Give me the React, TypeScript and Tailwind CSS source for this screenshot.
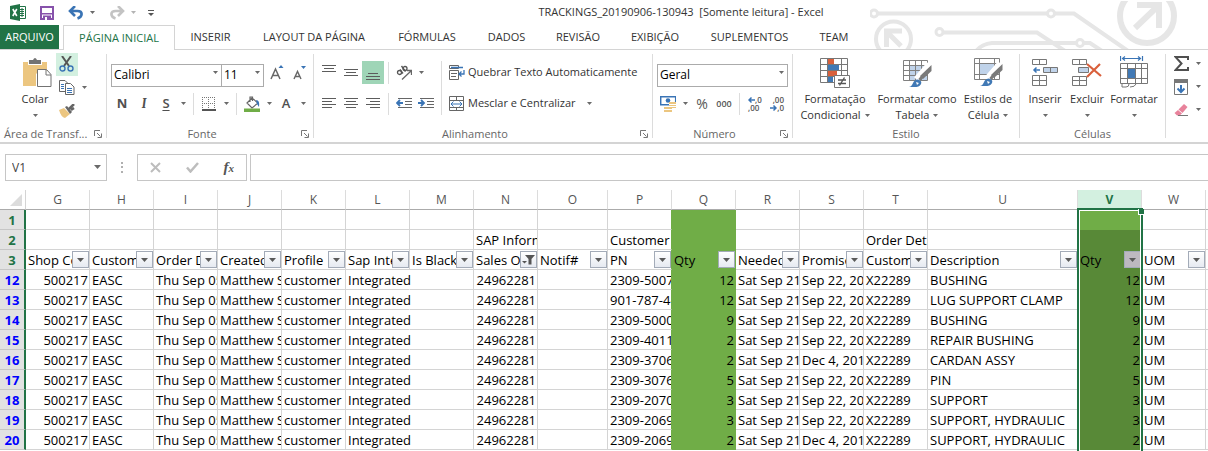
import type { ReactNode } from "react";

type Kids = { children?: ReactNode };

function Caret({ className = "" }: { className?: string }) {
  return (
    <svg width="5" height="3" viewBox="0 0 5 3" className={`shrink-0 ${className}`} aria-hidden="true">
      <path d="M0 0h5L2.5 3z" fill="#6a6a6a" />
    </svg>
  );
}

function Launcher({ label }: { label: string }) {
  return (
    <button aria-label={label} className="absolute right-[4px] top-1 h-2 w-2">
      <svg width="8" height="8" viewBox="0 0 8 8" className="block" fill="none" stroke="#777">
        <path d="M.5 6V.5H6M3 3l3.5 3.500M7.500 3.500v4h-4" />
      </svg>
    </button>
  );
}

function Group({ title, launcher, width, captionLeft, children }: Kids & { title: string; launcher?: boolean; width: string; captionLeft?: boolean }) {
  return (
    <section className={`flex shrink-0 flex-col border-r border-[#dcdcdc] ${width}`} aria-label={title}>
      <div className="h-[72px]">{children}</div>
      <div className={`relative h-3 text-[11px] leading-4 text-[#666] ${captionLeft ? "pl-1" : launcher ? "pr-4 text-center" : "text-center"}`}>
        {title}
        {launcher && <Launcher label={`Opções de ${title}`} />}
      </div>
    </section>
  );
}

function Icon({ w, h, children, className = "" }: Kids & { w: number; h: number; className?: string }) {
  return (
    <svg width={w} height={h} viewBox={`0 0 ${w} ${h}`} fill="none" className={`block shrink-0 ${className}`} aria-hidden="true">
      {children}
    </svg>
  );
}

function Tool({ label, className = "", children }: Kids & { label: string; className?: string }) {
  return (
    <button aria-label={label} className={`flex h-[23px] w-[22px] shrink-0 items-center justify-center ${className}`}>
      {children}
    </button>
  );
}

function Drop({ label, className = "" }: { label: string; className?: string }) {
  return (
    <button aria-label={label} className={`flex h-[23px] w-3 shrink-0 items-center justify-center ${className}`}>
      <Caret />
    </button>
  );
}

function Rule() {
  return <span className="h-[22px] w-px shrink-0 bg-[#dcdcdc]" />;
}

function Lines({ d, active, label }: { d: string; active?: boolean; label: string }) {
  return (
    <Tool label={label} className={active ? "bg-[#9fd5b7]" : ""}>
      <Icon w={14} h={17}>
        <path d={d} stroke="#5c5c5c" />
      </Icon>
    </Tool>
  );
}

function Select({ label, value, options, className }: { label: string; value: string; options: string[]; className: string }) {
  return (
    <div className={`relative h-[23px] shrink-0 ${className}`}>
      <select aria-label={label} defaultValue={value} className="h-full w-full appearance-none border border-[#ababab] bg-white pl-[2px] text-[12px] leading-none text-black outline-none">
        {options.map((o) => (
          <option key={o}>{o}</option>
        ))}
      </select>
      <Caret className="pointer-events-none absolute right-1 top-[10px]" />
    </div>
  );
}

function Big({ lines, width, children }: Kids & { lines: string[]; width: string }) {
  return (
    <button className={`flex shrink-0 flex-col items-center text-[11px] leading-4 text-[#333] ${width}`}>
      <span className="flex h-[34px] items-end">{children}</span>
      <span className="mt-[3px] whitespace-nowrap">{lines[0]}</span>
      <span className="flex h-4 items-center gap-1 whitespace-nowrap">
        {lines[1]}
        <Caret />
      </span>
    </button>
  );
}

function Circuit() {
  return (
    <svg width="320" height="49" viewBox="870 0 320 49" fill="none" className="absolute bottom-0 right-[18px]" aria-hidden="true">
      <g stroke="#e6e6e6" strokeWidth="4">
        <path d="M878 12.500H1047M1055 12.500H1074L1128 50M943 31.500H1037L1065 50M976 50Q982 43 992 42H1076M1084 42H1090L1102 50" />
        <circle cx="874" cy="12.500" r="3.500" strokeWidth="3" />
        <circle cx="939.500" cy="31" r="3.500" strokeWidth="3" />
        <circle cx="1051" cy="12.500" r="3.500" strokeWidth="3" />
        <circle cx="1080" cy="42" r="3.500" strokeWidth="3" />
        <circle cx="893.500" cy="38" r="17.500" />
        <circle cx="1147" cy="15" r="27" strokeWidth="6" />
        <path d="M902 30H886.500V46M887 31l14 14" strokeWidth="5" />
        <path d="M1137 4H1159V27M1158 5l-23 22" strokeWidth="6" />
      </g>
    </svg>
  );
}

function QuickAccess() {
  return (
    <div className="flex items-center pl-[10px]">
      <Icon w={17} h={17}>
        <path d="M9 2.500h6.500v12H9" fill="#fff" stroke="#217346" />
        <path d="M10 5.500h4M10 7.500h4M10 9.500h4M10 11.500h4M12 4v9" stroke="#217346" />
        <path d="M0 2l10-2v17L0 15z" fill="#217346" />
        <path d="M2.800 5l4 7M6.800 5l-4 7" stroke="#fff" strokeWidth="1.600" />
      </Icon>
      <button aria-label="Salvar" className="ml-[13px]">
        <Icon w={14} h={14}>
          <path d="M1 1h12v12H1z" stroke="#8752ab" strokeWidth="2" fill="#fff" />
          <path d="M1 7h12v1.500H1zM3 9.500h8V14H3z" fill="#8752ab" />
          <path d="M5 11h2v3H5z" fill="#fff" />
        </Icon>
      </button>
      <button aria-label="Desfazer" className="ml-[14px]">
        <Icon w={16} h={14}>
          <path d="M7 0L2 5l5 5M2 5h7.500c5.500 0 5.500 5.500 0 7.500" stroke="#3a74b5" strokeWidth="2.600" />
        </Icon>
      </button>
      <button aria-label="Opções de desfazer" className="ml-[6px]"><Caret /></button>
      <button aria-label="Refazer" className="ml-[14px]">
        <Icon w={16} h={14}>
          <path d="M9 0l5 5-5 5M14 5H6.500c-5.500 0-5.500 5.500 0 7.500" stroke="#c3c3c3" strokeWidth="2.600" />
        </Icon>
      </button>
      <button aria-label="Opções de refazer" className="ml-[6px] opacity-50"><Caret /></button>
      <button aria-label="Personalizar" className="ml-3">
        <Icon w={6} h={6}>
          <path d="M0 .5h6" stroke="#555" />
          <path d="M0 3h6L3 6z" fill="#555" />
        </Icon>
      </button>
    </div>
  );
}

const tabs = [
  ["INSERIR", "w-[71px]"],
  ["LAYOUT DA PÁGINA", "w-[136px]"],
  ["FÓRMULAS", "w-[90px]"],
  ["DADOS", "w-[69px]"],
  ["REVISÃO", "w-[74px]"],
  ["EXIBIÇÃO", "w-20"],
  ["SUPLEMENTOS", "w-[109px]"],
  ["TEAM", "w-[60px]"],
];

function Brush() {
  return (
    <>
      <path d="M13 20L26 5M14 21L27 9" stroke="#fff" strokeWidth="5" />
      <path d="M28.500 6v6l-8.500 8-3-3z" fill="#7a7a7a" />
      <path d="M19 18l-2.500 3" stroke="#7a7a7a" strokeWidth="3" />
      <path d="M6 28c5-1 3-7 8.500-7.500 5.500.5 5 6.500-1 7.500z" fill="#4179b5" />
      <path d="M13 23l3 1-2 2z" fill="#fff" />
    </>
  );
}

function Ribbon() {
  return (
    <div className="flex overflow-hidden border-b-2 border-[#d4d4d4] pb-1 pt-1">
      <Group title="Área de Transf..." launcher captionLeft width="w-[107px]">
        <div className="flex">
          <button className="flex w-[70px] flex-col items-center text-[11px] leading-4 text-[#333]">
            <span className="flex h-[34px] items-end pl-1">
              <Icon w={29} h={30}>
                <path d="M0 4h5v3h14V4h5v9h-8l-3 3v12H0z" fill="#ecc680" />
                <path d="M6 2h4q2-4 4 0h4v4H6z" fill="#737373" />
                <path d="M14.500 11.500h9l4.500 5v12H14.500zM23 12v5h5" fill="#fff" stroke="#737373" />
              </Icon>
            </span>
            <span className="mt-[3px]">Colar</span>
            <span className="flex h-4 items-center"><Caret /></span>
          </button>
          <div className="-ml-[14px] -mt-px flex flex-col">
            <Tool label="Recortar" className="bg-[#d3f0e0]">
              <Icon w={16} h={17}>
                <path d="M3 0l7 10M12 0L5 10" stroke="#555" strokeWidth="2" />
                <circle cx="3.500" cy="12.500" r="2.500" stroke="#3a74b5" strokeWidth="1.400" />
                <circle cx="11.500" cy="12.500" r="2.500" stroke="#3a74b5" strokeWidth="1.400" />
              </Icon>
            </Tool>
            <div className="flex">
              <Tool label="Copiar">
                <Icon w={16} h={15}>
                  <path d="M.5.5H6l3 3v8H.5z" fill="#fff" stroke="#666" />
                  <path d="M6.500 3.500h5l3.500 3.500v7.500H6.500z" fill="#fff" stroke="#666" />
                  <path d="M2 4.500h3M2 6.500h3M2 8.500h3M8 8.500h5M8 10.500h5M8 12.500h5" stroke="#3a74b5" />
                </Icon>
              </Tool>
              <Drop label="Opções de copiar" />
            </div>
            <Tool label="Pincel de Formatação">
              <Icon w={16} h={14}>
                <path d="M0 6l5-2 6 6-5 4q-4-1-6-8z" fill="#ecc680" />
                <path d="M6 3l2-1 5 6-2 2z" fill="#666" />
                <path d="M10 5l5-5M12 6l3-2" stroke="#666" strokeWidth="2.500" />
              </Icon>
            </Tool>
          </div>
        </div>
      </Group>

      <Group title="Fonte" launcher width="w-[207px]">
        <div className="flex flex-col gap-2 pt-[7px]">
          <div className="flex pl-1">
            <Select label="Fonte" value="Calibri" options={["Calibri", "Arial"]} className="w-[111px]" />
            <Select label="Tamanho da fonte" value="11" options={["11", "12"]} className="-ml-px w-[43px]" />
            <Tool label="Aumentar fonte" className="ml-[2px]">
              <Icon w={14} h={15}>
                <path d="M1 14L5.500 4 10 14M2.500 10.500h6" stroke="#666" strokeWidth="1.500" />
                <path d="M8.500 3L11 0l2.500 3z" fill="#3a74b5" />
              </Icon>
            </Tool>
            <Tool label="Diminuir fonte">
              <Icon w={13} h={15}>
                <path d="M1 14l3.500-7.500L8 14M2.200 11.500h4.600" stroke="#666" strokeWidth="1.400" />
                <path d="M8 1h5l-2.500 3z" fill="#3a74b5" />
              </Icon>
            </Tool>
          </div>
          <div className="flex items-center pl-1 text-[13px] text-[#505050]">
            <Tool label="Negrito"><b>N</b></Tool>
            <Tool label="Itálico"><i className="font-bold font-serif">I</i></Tool>
            <Tool label="Sublinhado"><span className="font-semibold underline underline-offset-2">S</span></Tool>
            <Drop label="Opções de sublinhado" className="mr-1" />
            <Rule />
            <Tool label="Bordas" className="ml-1">
              <Icon w={14} h={14}>
                <path d="M0 .5h13M0 6.500h13M.5 0v13M6.500 0v13M12.500 0v13" stroke="#777" strokeDasharray="1 1" />
                <path d="M0 13h14" stroke="#555" strokeWidth="2" />
              </Icon>
            </Tool>
            <Drop label="Opções de bordas" className="mr-1" />
            <Rule />
            <Tool label="Cor de preenchimento" className="ml-1">
              <Icon w={17} h={16}>
                <path d="M3 7l5-5 6 5-6 5zM6 6V1h2.500v4" fill="#fff" stroke="#666" strokeWidth="1.200" />
                <path d="M12 4q4 0 3 7l-2-3z" fill="#3a74b5" />
                <path d="M0 12.500h16V16H0z" fill="#70ad47" />
              </Icon>
            </Tool>
            <Drop label="Opções de preenchimento" />
            <Tool label="Cor da fonte"><span className="font-semibold">A</span></Tool>
            <Drop label="Opções de cor da fonte" />
          </div>
        </div>
      </Group>

      <Group title="Alinhamento" launcher width="w-[339px]">
        <div className="flex pl-1 pt-[7px]">
          <div className="flex flex-col gap-2">
            <div className="flex items-center">
              <Lines label="Alinhar em cima" d="M0 1.500h14M2 4.500h10M0 7.500h14" />
              <Lines label="Alinhar no meio" d="M0 5.500h14M2 8.500h10M0 11.500h14" />
              <Lines label="Alinhar embaixo" active d="M2 9.500h10M0 12.500h14M0 15.500h14" />
              <span className="w-1" />
              <Rule />
              <Tool label="Orientação" className="ml-1">
                <Icon w={16} h={15}>
                  <g stroke="#555" strokeWidth="1.300">
                    <circle cx="3.500" cy="7.500" r="2" />
                    <path d="M4 4.500l3 4M5.500 1l4 5.500" />
                    <circle cx="9" cy="3.500" r="2" />
                  </g>
                  <path d="M6 14.500L15 6M11 5.500h4.500V10" stroke="#666" strokeWidth="1.300" />
                </Icon>
              </Tool>
              <Drop label="Opções de orientação" />
            </div>
            <div className="flex items-center">
              <Lines label="Alinhar à esquerda" d="M0 3.500h14M0 6.500h10M0 9.500h14M0 12.500h10" />
              <Lines label="Centralizar" d="M0 3.500h14M2 6.500h10M0 9.500h14M2 12.500h10" />
              <Lines label="Alinhar à direita" d="M0 3.500h14M4 6.500h10M0 9.500h14M4 12.500h10" />
              <span className="w-1" />
              <Rule />
              <Tool label="Diminuir recuo" className="ml-1">
                <Icon w={16} h={11}>
                  <path d="M2 .5h14M9 3.500h7M9 6.500h7M2 9.500h14" stroke="#666" />
                  <path d="M7 5H1M4 2L1 5l3 3" stroke="#3a74b5" strokeWidth="1.800" />
                </Icon>
              </Tool>
              <Tool label="Aumentar recuo">
                <Icon w={16} h={11}>
                  <path d="M2 .5h14M9 3.500h7M9 6.500h7M2 9.500h14" stroke="#666" />
                  <path d="M0 5h6M3 2l3 3-3 3" stroke="#3a74b5" strokeWidth="1.800" />
                </Icon>
              </Tool>
            </div>
          </div>
          <span className="ml-auto h-[54px] w-px bg-[#dcdcdc]" />
          <div className="flex w-[210px] flex-col gap-2 pl-[7px] text-[#333]">
            <button className="flex h-[23px] items-center gap-[3px] whitespace-nowrap text-[11px]">
              <Icon w={16} h={15}>
                <path d="M.5.5h9v3h-9zM.5 5.500h9v9h-9zM2 8.500h6M2 11.500h5" stroke="#666" />
                <path d="M2 2.500h12M15 5v4h-5M12.500 6.500L10 9l2.500 2.500" stroke="#3a74b5" strokeWidth="1.300" />
              </Icon>
              Quebrar Texto Automaticamente
            </button>
            <button className="flex h-[23px] items-center gap-[3px] whitespace-nowrap text-[11px]">
              <Icon w={16} h={16}>
                <path d="M.5.5h14v14H.5zM.5 4.500h14M.5 11.500h14M7.500 0v4.500M7.500 11.500V15" stroke="#666" />
                <path d="M2 8h11M4.500 5.500L2 8l2.500 2.500M10.500 5.500L13 8l-2.500 2.500" stroke="#3a74b5" />
              </Icon>
              Mesclar e Centralizar
              <Caret className="ml-2" />
            </button>
          </div>
        </div>
      </Group>

      <Group title="Número" launcher width="w-[140px]">
        <div className="flex flex-col gap-2 pl-1 pt-[7px]">
          <Select label="Formato de número" value="Geral" options={["Geral", "Número"]} className="w-[131px]" />
          <div className="flex items-center text-[#555]">
            <Tool label="Formato de contabilização">
              <Icon w={16} h={16}>
                <path d="M.7.700h15v8H.7z" fill="#fff" stroke="#3a74b5" strokeWidth="1.500" />
                <circle cx="8" cy="4.500" r="2.300" fill="#3a74b5" />
                <path d="M9 6h7v6H9zM4 11h8v5H4z" fill="#ecc680" />
                <path d="M9 8.500h7M4 13.500h8M9 10.500h7" stroke="#fff" />
              </Icon>
            </Tool>
            <Drop label="Opções de contabilização" />
            <Tool label="Estilo de porcentagem" className="text-[14px]">%</Tool>
            <Tool label="Separador de milhares" className="text-[9px] font-semibold">000</Tool>
            <span className="w-1" />
            <Rule />
            <Tool label="Aumentar casas decimais" className="ml-1">
              <span className="grid grid-cols-2 text-left text-[8px] font-semibold leading-[8px]">
                <Icon w={7} h={8}><path d="M7 4H1M3.500 1.500L1 4l2.500 2.500" stroke="#3a74b5" strokeWidth="1.500" /></Icon>
                <span>,0</span>
                <span className="col-span-2">,00</span>
              </span>
            </Tool>
            <Tool label="Diminuir casas decimais">
              <span className="grid grid-cols-2 text-right text-[8px] font-semibold leading-[8px]">
                <span className="col-span-2">,00</span>
                <Icon w={7} h={8}><path d="M0 4h6M3.500 1.500L6 4l-2.500 2.500" stroke="#3a74b5" strokeWidth="1.500" /></Icon>
                <span>,0</span>
              </span>
            </Tool>
          </div>
        </div>
      </Group>

      <Group title="Estilo" width="w-[227px]">
        <div className="flex">
          <Big lines={["Formatação", "Condicional"]} width="w-[84px]">
            <Icon w={31} h={30}>
              <path d="M.5.500h27v24H.5z" fill="#fff" />
              <path d="M8 1h6v5H8zM8 12h9v6H8z" fill="#d9603c" />
              <path d="M8 6h11v6H8zM8 18h5v6H8z" fill="#4179b5" />
              <path d="M.5.500h27v24H.5zM.5 6.500h27M.5 12.500h27M.5 18.500h27M7.500 0v25M21.500 0v25" stroke="#777" />
              <path d="M14.500 17.500h15v12h-15z" fill="#fff" stroke="#777" />
              <path d="M18 22h8M18 25.500h8M24.500 19.500l-5 8" stroke="#555" strokeWidth="1.400" />
            </Icon>
          </Big>
          <Big lines={["Formatar como", "Tabela"]} width="w-20">
            <Icon w={29} h={29}>
              <path d="M.5 1.500h24v20H.5z" fill="#fff" />
              <path d="M6 6h18v15H6z" fill="#c0d3ea" />
              <path d="M.5 1.500h24v20H.5zM.5 6.500h24M.5 11.500h24M.5 16.500h24M6.500 1v20M12.500 1v20M18.500 1v20" stroke="#808080" />
              <Brush />
            </Icon>
          </Big>
          <Big lines={["Estilos de", "Célula"]} width="w-[62px]">
            <Icon w={29} h={30}>
              <path d="M.5.500h25v21H.5z" fill="#fff" />
              <path d="M6 6h14v10H6z" fill="#c0d3ea" />
              <path d="M.5.500h25v21H.5zM.5 5.500h25M.5 16.500h25M5.500 0v21M20.500 0v21" stroke="#808080" />
              <Brush />
            </Icon>
          </Big>
        </div>
      </Group>

      <Group title="Células" width="w-[146px]">
        <div className="flex pl-1">
          <Big lines={["Inserir"]} width="w-[42px]">
            <Icon w={27} h={29} className="mb-px">
              <path d="M.5 1.500h14v5H.5zM7.500 1v5M.5 17.500h14v10H.5zM.5 22.500h14M7.500 17v10" stroke="#777" />
              <path d="M11.500 9.500h14v5h-14z" fill="#c0d3ea" stroke="#777" />
              <path d="M18.500 9v6" stroke="#777" />
              <path d="M8 12H2M4.500 9.500L2 12l2.500 2.500" stroke="#3a74b5" strokeWidth="1.500" />
            </Icon>
          </Big>
          <Big lines={["Excluir"]} width="w-[42px]">
            <Icon w={30} h={29} className="mb-px">
              <path d="M.5 1.500h14v5H.5zM7.500 1v5M.5 18.500h14v9H.5zM.5 22.500h14M7.500 18v10" stroke="#777" />
              <path d="M6.500 9.500h10v5h-10z" fill="#c0d3ea" stroke="#777" />
              <path d="M15 6l14 12M28 6L15 19" stroke="#d9603c" strokeWidth="2.200" />
            </Icon>
          </Big>
          <Big lines={["Formatar"]} width="w-[52px]">
            <Icon w={29} h={32}>
              <path d="M.5 7.500h27v20H.5z" fill="#fff" />
              <path d="M8 13h8v9H8z" fill="#4179b5" />
              <path d="M.5 7.500h27v20H.5zM.5 12.500h27M.5 22.500h27M7.500 7v20M15.500 7v20M21.500 7v20M2 28v3h4q3 0 3-3M10 31q5 0 6-3" stroke="#777" />
              <path d="M.5 0v5M22.500 0v5M3 2.500h17M5 .5l-2.500 2L5 4.500M18 .5l2.500 2-2.500 2" stroke="#3a74b5" strokeWidth="1.200" />
            </Icon>
          </Big>
        </div>
      </Group>

      <section aria-label="Edição" className="-mt-[2px] flex w-[42px] shrink-0 flex-col pl-1">
        <div className="flex">
          <Tool label="AutoSoma">
            <Icon w={15} h={15}>
              <path d="M14 4V1H1.500l6 6.500-6 6.500H14v-3" stroke="#505050" strokeWidth="2" />
            </Icon>
          </Tool>
          <Drop label="Opções de soma" />
        </div>
        <div className="flex">
          <Tool label="Preencher">
            <Icon w={14} h={16}>
              <path d="M.5.500h13v15H.5z" fill="#fff" stroke="#777" />
              <path d="M0 0h14v4H0z" fill="#777" />
              <path d="M7 6v7M3.500 9.500L7 13l3.500-3.500" stroke="#3a74b5" strokeWidth="2" />
            </Icon>
          </Tool>
          <Drop label="Opções de preencher" />
        </div>
        <div className="flex">
          <Tool label="Limpar">
            <Icon w={14} h={14}>
              <path d="M4.500 6.500L10 1l3.500 3L8.500 10z" fill="#e8829b" />
              <path d="M.5 10L4 7l4 3.500-2.500 2H3z" fill="#e8829b" />
              <path d="M4 12.500h10" stroke="#777" />
            </Icon>
          </Tool>
          <Drop label="Opções de limpar" />
        </div>
      </section>
    </div>
  );
}

function FormulaBar() {
  return (
    <div className="flex h-[27px] items-stretch pl-[5px] text-[#555]">
      <div className="relative w-[102px] shrink-0">
        <input aria-label="Caixa de nome" defaultValue="V1" className="h-full w-full border border-[#c6c6c6] pl-[6px] text-[12px] text-[#444] outline-none" />
        <svg width="7" height="4" viewBox="0 0 7 4" className="absolute right-[6px] top-[11px]" aria-hidden="true">
          <path d="M0 0h7L3.500 4z" fill="#6a6a6a" />
        </svg>
      </div>
      <Icon w={30} h={27}>
        <path d="M14 8h2v2h-2zM14 12h2v2h-2zM14 17h2v2h-2z" fill="#b0b0b0" />
      </Icon>
      <div className="flex w-[110px] shrink-0 items-center justify-between border border-[#c6c6c6] px-3">
        <button aria-label="Cancelar">
          <Icon w={11} h={11}><path d="M1 1l9 9M10 1l-9 9" stroke="#bdbdbd" strokeWidth="2" /></Icon>
        </button>
        <button aria-label="Inserir valor">
          <Icon w={13} h={11}><path d="M1 5.500L4.500 9.500 12 1" stroke="#bdbdbd" strokeWidth="2.500" /></Icon>
        </button>
        <button aria-label="Inserir função" className="font-['Liberation_Serif',serif] text-[15px] font-bold italic leading-none">
          f<span className="text-[11px]">x</span>
        </button>
      </div>
      <input aria-label="Barra de fórmulas" className="ml-[3px] min-w-0 flex-1 border border-r-0 border-[#c6c6c6] px-1 text-[12px] outline-none" />
    </div>
  );
}

const columns = [
  ["G", "w-16"], ["H", "w-16"], ["I", "w-16"], ["J", "w-16"], ["K", "w-16"], ["L", "w-16"], ["M", "w-16"], ["N", "w-16"],
  ["O", "w-[70px]"], ["P", "w-16"], ["Q", "w-16"], ["R", "w-16"], ["S", "w-16"], ["T", "w-16"], ["U", "w-[150px]"], ["V", "w-16"], ["W", "w-16"],
];

const headings: Record<string, string> = {
  G: "Shop Code", H: "Customer", I: "Order Date", J: "Created By", K: "Profile", L: "Sap Integ", M: "Is Blacklist", N: "Sales Order",
  O: "Notif#", P: "PN", Q: "Qty", R: "Needed", S: "Promised", T: "Customer", U: "Description", V: "Qty", W: "UOM",
};

const records: [number, string, number, string, string][] = [
  [12, "2309-5007", 12, "Sep 22, 2019", "BUSHING"],
  [13, "901-787-4-", 12, "Sep 22, 2019", "LUG SUPPORT CLAMP"],
  [14, "2309-5000", 9, "Sep 22, 2019", "BUSHING"],
  [15, "2309-4011", 2, "Sep 22, 2019", "REPAIR BUSHING"],
  [16, "2309-3706", 2, "Dec 4, 2019", "CARDAN ASSY"],
  [17, "2309-3076", 5, "Sep 22, 2019", "PIN"],
  [18, "2309-2070", 3, "Sep 22, 2019", "SUPPORT"],
  [19, "2309-2069", 3, "Sep 22, 2019", "SUPPORT, HYDRAULIC"],
  [20, "2309-2069", 2, "Dec 4, 2019", "SUPPORT, HYDRAULIC"],
];

function fill(col: string, row: number) {
  if (col === "P") return "border-b-[#d4d4d4] border-r-[#70ad47]";
  if (col === "Q") return "bg-[#70ad47] border-[#70ad47]";
  if (col === "V") return row === 1 ? "bg-[#70ad47] border-[#70ad47]" : "bg-[#588937] border-[#588937]";
  return "border-[#d4d4d4]";
}

function Cell({ col, row, right, spill, children }: Kids & { col: string; row: number; right?: boolean; spill?: boolean }) {
  const edge = spill ? "border-b-[#d4d4d4] border-r-white" : fill(col, row);
  return (
    <td className={`h-5 border-b border-r p-0 ${edge}`}>
      <div className={`h-[19px] whitespace-nowrap pl-[2px] pt-px ${spill ? "overflow-visible" : "overflow-hidden"} ${right ? "pr-px text-right" : ""}`}>{children}</div>
    </td>
  );
}

function RowHead({ n }: { n: number }) {
  return (
    <th scope="row" className={`h-5 border-b border-r-2 border-b-[#c6c6c6] border-r-[#217346] bg-[#e2e2e2] p-0 text-center font-bold ${n > 3 ? "text-[#0000ff]" : "text-[#217346]"}`}>
      <div className="h-[19px] pt-px">{n}</div>
    </th>
  );
}

function FilterButton({ col }: { col: string }) {
  return (
    <button
      aria-label={`Filtrar ${headings[col]}`}
      className={`mt-px flex h-[17px] w-[17px] shrink-0 items-center justify-center border border-[#a3abb8] ${col === "V" ? "bg-[#bdb9c0]" : "bg-linear-to-b from-white to-[#e6eaf1]"}`}
    >
      {col === "N" ? (
        <Icon w={13} h={11}>
          <path d="M3 1h10L9.500 5v5.500h-3V5z" fill="#555" />
          <path d="M0 7h5L2.500 9.500z" fill="#555" />
        </Icon>
      ) : (
        <Icon w={7} h={4}><path d="M0 0h7L3.500 4z" fill="#5a5a5a" /></Icon>
      )}
    </button>
  );
}

function Sheet() {
  const groups: Record<string, string> = { N: "SAP Information", P: "Customer", T: "Order Details" };
  return (
    <table className="w-full table-fixed border-separate border-spacing-0 text-[13px] leading-[19px] text-black">
      <colgroup>
        <col className="w-[26px]" />
        {columns.map(([c, w]) => <col key={c} className={w} />)}
        <col />
      </colgroup>
      <thead>
        <tr>
          <td className="h-5 border-b border-r border-[#ababab] border-r-[#d4d4d4] p-0">
            <Icon w={12} h={12} className="ml-[10px]"><path d="M12 0v12H0z" fill="#dcdcdc" /></Icon>
          </td>
          {columns.map(([c]) => (
            <th
              key={c}
              scope="col"
              className={`relative h-5 border-b border-r border-b-[#ababab] border-r-[#dcdcdc] p-0 text-center text-[12px] ${c === "V" ? "bg-[#d3f0e0] font-bold text-[#217346]" : "font-normal text-[#555]"}`}
            >
              {c}
              {c === "V" && (
                <span className="pointer-events-none absolute -left-px -right-[2px] top-[18px] z-10 h-screen border-2 border-[#217346] shadow-[inset_0_0_0_1px_#fff]">
                  <span className="absolute -right-[3px] -top-px h-[6px] w-[6px] border-b border-l border-white bg-[#217346]" />
                </span>
              )}
            </th>
          ))}
          <td className="border-b border-[#ababab]" />
        </tr>
      </thead>
      <tbody>
        {[1, 2].map((n) => (
          <tr key={n}>
            <RowHead n={n} />
            {columns.map(([c]) => <Cell key={c} col={c} row={n}>{n === 2 ? groups[c] : null}</Cell>)}
            <td className="border-b border-[#d4d4d4]" />
          </tr>
        ))}
        <tr>
          <RowHead n={3} />
          {columns.map(([c]) => (
            <td key={c} className={`h-5 border-b border-r p-0 ${fill(c, 3)}`}>
              <div className="flex h-[19px] pl-[2px]">
                <span className="min-w-0 flex-1 overflow-hidden whitespace-nowrap pt-px">{headings[c]}</span>
                <FilterButton col={c} />
              </div>
            </td>
          ))}
          <td className="border-b border-[#d4d4d4]" />
        </tr>
        {records.map(([n, pn, qty, promised, description]) => (
          <tr key={n}>
            <RowHead n={n} />
            <Cell col="G" row={n} right>500217</Cell>
            <Cell col="H" row={n}>EASC</Cell>
            <Cell col="I" row={n}>Thu Sep 05</Cell>
            <Cell col="J" row={n}>Matthew S</Cell>
            <Cell col="K" row={n}>customer</Cell>
            <Cell col="L" row={n} spill>Integrated</Cell>
            <Cell col="M" row={n} />
            <Cell col="N" row={n} right>24962281</Cell>
            <Cell col="O" row={n} />
            <Cell col="P" row={n}>{pn}</Cell>
            <Cell col="Q" row={n} right>{qty}</Cell>
            <Cell col="R" row={n}>Sat Sep 21</Cell>
            <Cell col="S" row={n}>{promised}</Cell>
            <Cell col="T" row={n}>X22289</Cell>
            <Cell col="U" row={n}>{description}</Cell>
            <Cell col="V" row={n} right>{qty}</Cell>
            <Cell col="W" row={n}>UM</Cell>
            <td className="border-b border-[#d4d4d4]" />
          </tr>
        ))}
      </tbody>
    </table>
  );
}

export default function App() {
  return (
    <div className="h-screen overflow-hidden bg-white font-['Open_Sans','Noto_Sans',sans-serif] text-[#333]">
      <header className="relative">
        <Circuit />
        <div className="relative flex h-[25px] items-center">
          <QuickAccess />
          <h1 className="flex-1 whitespace-pre text-center text-[11px] font-normal">TRACKINGS_20190906-130943  [Somente leitura] - Excel</h1>
        </div>
        <nav aria-label="Guias" className="relative flex h-[25px] border-b border-[#d4d4d4] text-[11px]">
          <button className="h-6 w-[59px] bg-[#217346] text-white">ARQUIVO</button>
          <button className="ml-1 h-[25px] w-28 border border-b-0 border-[#d4d4d4] bg-white text-[#217346]">PÁGINA INICIAL</button>
          {tabs.map(([t, w]) => <button key={t} className={`h-6 whitespace-nowrap pt-px ${w}`}>{t}</button>)}
        </nav>
      </header>
      <Ribbon />
      <div className="pb-[9px] pt-[10px]"><FormulaBar /></div>
      <Sheet />
    </div>
  );
}
